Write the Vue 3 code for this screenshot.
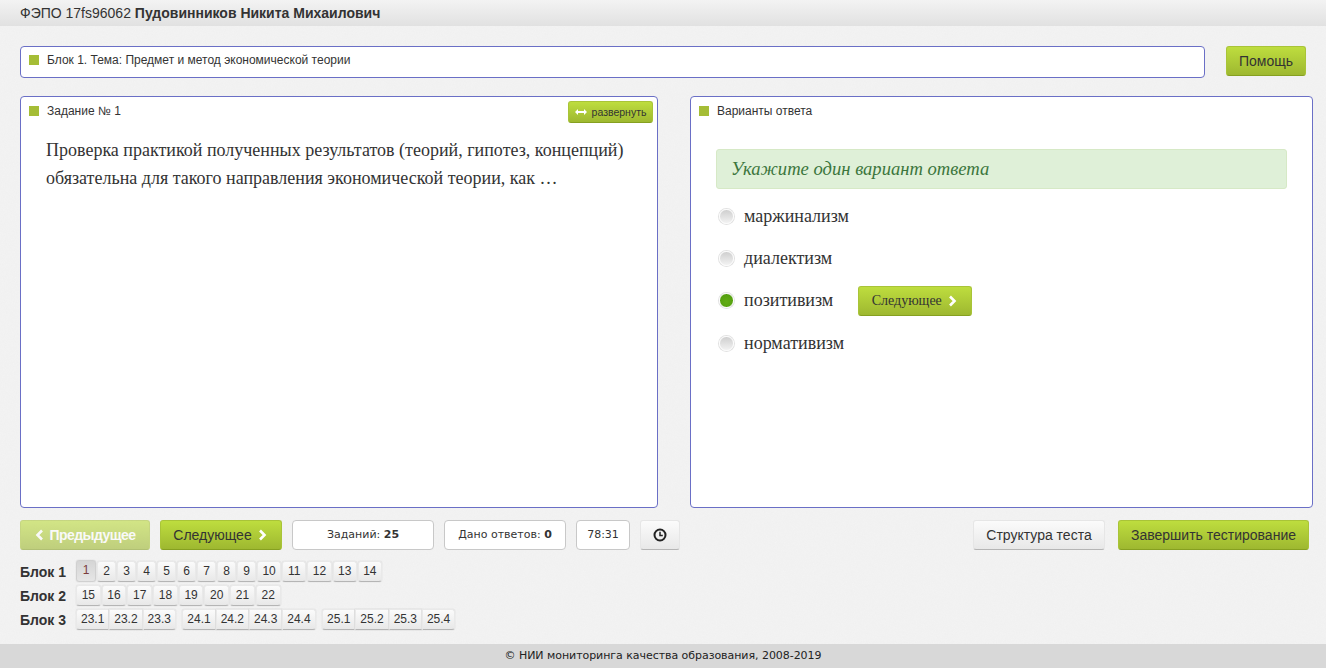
<script setup>
const block1 = Array.from({ length: 14 }, (_, i) => String(i + 1))
const block2 = Array.from({ length: 8 }, (_, i) => String(i + 15))
const block3 = [
  ['23.1', '23.2', '23.3'],
  ['24.1', '24.2', '24.3', '24.4'],
  ['25.1', '25.2', '25.3', '25.4']
]
const answers = [
  { text: 'маржинализм', on: false },
  { text: 'диалектизм', on: false },
  { text: 'позитивизм', on: true },
  { text: 'нормативизм', on: false }
]
</script>

<template>
  <div class="page">
    <header class="top">ФЭПО 17fs96062 <b>Пудовинников Никита Михаилович</b></header>

    <main class="main">
      <div class="theme-row">
        <div class="panel theme">
          <span class="mark"></span>
          <span>Блок 1. Тема: Предмет и метод экономической теории</span>
        </div>
        <button class="btn green help">Помощь</button>
      </div>

      <div class="columns">
        <section class="panel task">
          <div class="head">
            <span class="mark"></span>
            <span>Задание № 1</span>
            <button class="btn green expand">
              <svg width="12" height="8" viewBox="0 0 12 8"><path d="M0 4l3-3v2h6V1l3 3-3 3V5H3v2z" fill="#fff" /></svg>
              развернуть
            </button>
          </div>
          <p class="question">Проверка практикой полученных результатов (теорий, гипотез, концепций) обязательна для такого направления экономической теории, как …</p>
        </section>

        <section class="panel answers">
          <div class="head">
            <span class="mark"></span>
            <span>Варианты ответа</span>
          </div>
          <div class="hint">Укажите один вариант ответа</div>
          <ul class="options">
            <li v-for="a in answers" :key="a.text" class="option">
              <span class="radio" :class="{ on: a.on }"></span>
              <span class="option-text">{{ a.text }}</span>
              <button v-if="a.on" class="btn green next-inline">
                Следующее
                <svg width="9" height="12" viewBox="0 0 9 12"><path d="M2 1.500L6.500 6 2 10.500" fill="none" stroke="#fff" stroke-width="2.600" /></svg>
              </button>
            </li>
          </ul>
        </section>
      </div>

      <div class="controls">
        <button class="btn green nav prev">
          <svg width="9" height="12" viewBox="0 0 9 12"><path d="M7 1.500L2.500 6 7 10.500" fill="none" stroke="#fff" stroke-width="2.600" /></svg>
          Предыдущее
        </button>
        <button class="btn green nav next">
          Следующее
          <svg width="9" height="12" viewBox="0 0 9 12"><path d="M2 1.500L6.500 6 2 10.500" fill="none" stroke="#fff" stroke-width="2.600" /></svg>
        </button>
        <div class="stat count">Заданий: <b>25</b></div>
        <div class="stat given">Дано ответов: <b>0</b></div>
        <div class="stat timer">78:31</div>
        <button class="btn gray clock">
          <svg width="14" height="14" viewBox="0 0 14 14"><circle cx="7" cy="7" r="5.500" fill="none" stroke="#222" stroke-width="2" /><path d="M7 3.800v3.600h2.800" fill="none" stroke="#222" stroke-width="1.500" /></svg>
        </button>
        <div class="spacer"></div>
        <button class="btn gray structure">Структура теста</button>
        <button class="btn green finish">Завершить тестирование</button>
      </div>

      <div class="blocks">
        <div class="block-row">
          <span class="block-label">Блок 1</span>
          <div class="nums">
            <span v-for="n in block1" :key="n" class="num" :class="{ current: n === '1', two: n.length > 1 }">{{ n }}</span>
          </div>
        </div>
        <div class="block-row">
          <span class="block-label">Блок 2</span>
          <div class="nums">
            <span v-for="n in block2" :key="n" class="num wide">{{ n }}</span>
          </div>
        </div>
        <div class="block-row">
          <span class="block-label">Блок 3</span>
          <div class="groups">
            <div v-for="(g, i) in block3" :key="i" class="group">
              <span v-for="n in g" :key="n" class="num sub">{{ n }}</span>
            </div>
          </div>
        </div>
      </div>
    </main>

    <footer class="foot">© НИИ мониторинга качества образования, 2008-2019</footer>
  </div>
</template>

<style>
html, body { margin: 0; padding: 0; }
</style>

<style scoped>
.page {
  width: 1326px;
  height: 668px;
  display: flex;
  flex-direction: column;
  overflow: hidden;
  font-family: "Liberation Sans", Arial, sans-serif;
  color: #333;
  background-color: #f4f4f4;
  background-image: url("data:image/svg+xml,%3Csvg xmlns='http://www.w3.org/2000/svg' width='200' height='200'%3E%3Cfilter id='n'%3E%3CfeTurbulence type='fractalNoise' baseFrequency='.9' numOctaves='2'/%3E%3CfeColorMatrix values='0 0 0 0 .5 0 0 0 0 .5 0 0 0 0 .5 0 0 0 .09 0'/%3E%3C/filter%3E%3Crect width='200' height='200' filter='url(%23n)'/%3E%3C/svg%3E");
}
.top {
  height: 26px;
  flex: none;
  box-sizing: border-box;
  padding-left: 20px;
  font-size: 14px;
  line-height: 27px;
  white-space: pre-wrap;
  background: linear-gradient(#f3f3f3, #e1e1e1);
}
.main {
  flex: 1;
  min-height: 0;
  display: flex;
  flex-direction: column;
  padding: 20px 13px 0 20px;
}
.panel {
  box-sizing: border-box;
  background: #fff;
  border: 1px solid #6a6fc6;
  border-radius: 4px;
  font-size: 12px;
}
.mark {
  width: 10px;
  height: 10px;
  flex: none;
  background: #a5bd36;
  margin-right: 8px;
}
.theme-row {
  display: flex;
  align-items: flex-start;
  height: 32px;
  flex: none;
}
.theme {
  width: 1185px;
  height: 32px;
  display: flex;
  align-items: center;
  padding: 0 0 4px 8px;
}
.btn {
  box-sizing: border-box;
  margin: 0;
  padding: 0;
  border-radius: 3px;
  font-family: inherit;
  color: #333;
  display: inline-flex;
  align-items: center;
  justify-content: center;
}
.green {
  border: 1px solid #a9c438;
  border-bottom-color: #86a020;
  background: linear-gradient(#bedd3e, #9eb830);
}
.gray {
  border: 1px solid #e6e6e6;
  border-bottom-color: #b5b5b5;
  background: linear-gradient(#fbfbfb, #e8e8e8);
}
.help {
  width: 80px;
  height: 30px;
  margin-left: 21px;
  font-size: 14px;
}
.columns {
  height: 412px;
  flex: none;
  margin-top: 18px;
  display: flex;
  gap: 32px;
}
.task {
  width: 638px;
}
.answers {
  width: 623px;
}
.head {
  height: 27px;
  display: flex;
  align-items: center;
  padding: 0 4px 0 8px;
}
.expand {
  width: 85px;
  height: 22px;
  margin-left: auto;
  margin-top: 3px;
  font-size: 10.500px;
  gap: 5px;
}
.question {
  margin: 12px 0 0;
  padding: 0 25px;
  font-family: "Liberation Serif", "Times New Roman", serif;
  font-size: 18px;
  line-height: 28px;
}
.hint {
  box-sizing: border-box;
  height: 40px;
  margin: 25px 25px 0;
  padding-left: 14px;
  border: 1px solid #d6e9c6;
  border-radius: 3px;
  background: #dff0d8;
  color: #3c763d;
  font-family: "Liberation Serif", "Times New Roman", serif;
  font-style: italic;
  font-size: 18.600px;
  line-height: 38px;
}
.options {
  list-style: none;
  margin: 6px 0 0;
  padding: 0 0 0 28px;
}
.option {
  height: 42.300px;
  display: flex;
  align-items: center;
  font-family: "Liberation Serif", "Times New Roman", serif;
  font-size: 18px;
}
.radio {
  box-sizing: border-box;
  width: 15px;
  height: 15px;
  flex: none;
  margin-right: 10px;
  border-radius: 50%;
  border: 1.500px solid #fbfbfb;
  background: linear-gradient(#cfcfcf, #f2f2f2);
  box-shadow: 0 0 0 1px #e2e2e2;
}
.radio.on {
  background: radial-gradient(circle at 50% 60%, #62ad14, #4f9a0e);
}
.next-inline {
  width: 114px;
  height: 30px;
  margin-left: 25px;
  padding-right: 2px;
  font-family: "Liberation Serif", "Times New Roman", serif;
  font-size: 14px;
  gap: 6px;
}
.controls {
  height: 30px;
  flex: none;
  margin-top: 12px;
  display: flex;
  gap: 10px;
}
.spacer {
  flex: 1;
}
.nav {
  height: 30px;
  font-size: 14px;
  gap: 6px;
}
.prev {
  width: 130px;
  opacity: .6;
  color: #fff;
  font-weight: 700;
  letter-spacing: -.55px;
}
.next {
  width: 122px;
  padding-right: 2px;
}
.stat {
  box-sizing: border-box;
  height: 30px;
  background: #fff;
  border: 1px solid #c8c8c8;
  border-radius: 4px;
  font-family: "DejaVu Sans", Verdana, sans-serif;
  font-size: 11px;
  line-height: 28px;
  text-align: center;
}
.count { width: 142px; }
.given { width: 122px; }
.timer { width: 54px; }
.clock { width: 40px; height: 30px; }
.structure {
  width: 132px;
  height: 30px;
  font-size: 14px;
}
.finish {
  width: 191px;
  height: 30px;
  margin-left: 3px;
  margin-right: 4px;
  font-size: 14px;
}
.blocks {
  margin-top: 11px;
  display: flex;
  flex-direction: column;
  gap: 3px;
}
.block-row {
  height: 21px;
  display: flex;
  align-items: center;
}
.block-label {
  width: 56px;
  flex: none;
  font-size: 14px;
  font-weight: 700;
}
.nums {
  display: flex;
  gap: 1px;
}
.groups {
  display: flex;
  gap: 6.500px;
}
.group {
  display: flex;
}
.num {
  box-sizing: border-box;
  width: 19px;
  height: 21px;
  padding: 0;
  font-size: 12px;
  line-height: 19px;
  text-align: center;
  border-radius: 3px;
  border: 1px solid #e9e9e9;
  border-bottom-color: #b5b5b5;
  background: linear-gradient(#fbfbfb, #e8e8e8);
  box-shadow: 0 0 1px rgba(0, 0, 0, .25);
}
.two {
  width: 24.200px;
}
.wide {
  width: 24.700px;
}
.sub {
  width: 33.300px;
  border-radius: 0;
}
.sub:first-child {
  border-radius: 3px 0 0 3px;
}
.sub:last-child {
  border-radius: 0 3px 3px 0;
}
.current {
  width: 20px;
  margin-top: -1px;
  height: 22px;
  color: #7a3b3b;
  background: linear-gradient(#d5d5d5, #e6e6e6);
  border-color: #d0d0d0;
}
.foot {
  height: 24px;
  flex: none;
  background: #d8d8d8;
  font-family: "DejaVu Sans", Verdana, sans-serif;
  font-size: 11px;
  letter-spacing: -.05px;
  line-height: 24px;
  text-align: center;
  color: #222;
}
</style>
